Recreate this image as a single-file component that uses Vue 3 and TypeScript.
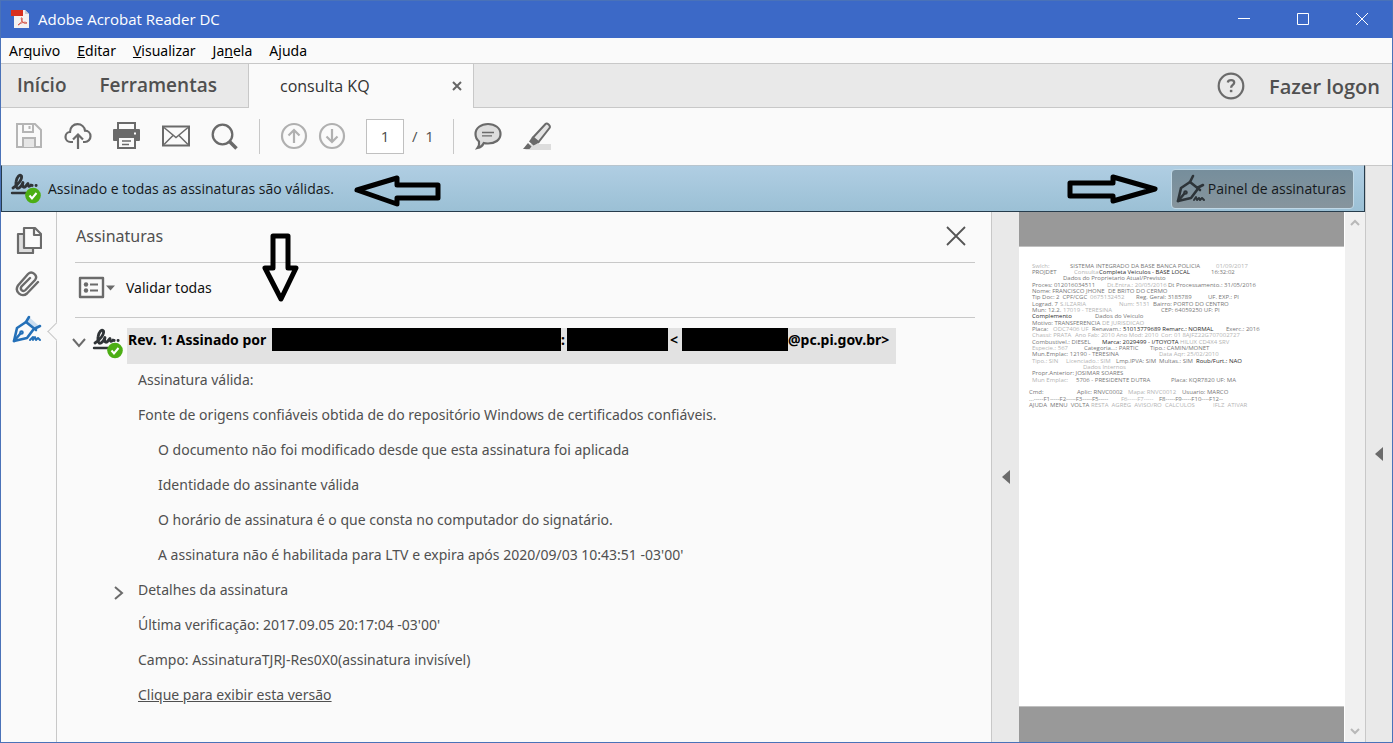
<script setup lang="ts">
type Segment = [text: string, width: number, tone?: string]

const menus = [
  { before: 'Ar', key: 'q', after: 'uivo' },
  { before: '', key: 'E', after: 'ditar' },
  { before: '', key: 'V', after: 'isualizar' },
  { before: 'Ja', key: 'n', after: 'ela' },
  { before: 'A', key: 'j', after: 'uda' },
]

const details = [
  'O documento não foi modificado desde que esta assinatura foi aplicada',
  'Identidade do assinante válida',
  'O horário de assinatura é o que consta no computador do signatário.',
  "A assinatura não é habilitada para LTV e expira após 2020/09/03 10:43:51 -03'00'",
]

const pageLines: Segment[][] = [
  [['Swlch:', 38, 'faint'], ['SISTEMA INTEGRADO DA BASE BANCA POLICIA', 146, 'mid'], ['01/09/2017', 40, 'faint']],
  [['PROJDET', 42, 'mid'], ['Consulta', 25, 'faint'], ['Completa Veiculos - BASE LOCAL', 112, 'dark'], ['16:32:02', 30, 'mid']],
  [['', 31], ['Dados do Proprietario Atual/Previsto', 120, 'mid']],
  [['Proces: 012016034511', 75, 'mid'], ['Dt.Entra.: 20/05/2016', 61, 'faint'], ['Dt Processamento.: 31/05/2016', 90, 'mid']],
  [['Nome: FRANCISCO JHONE', 76, 'mid'], ['DE BRITO DO CERMO', 70, 'mid']],
  [['Tip Doc: 2  CPF/CGC', 58, 'mid'], ['0675132452', 46, 'faint'], ['Reg. Geral: 3185789', 72, 'mid'], ['UF. EXP.: PI', 40, 'mid']],
  [['Lograd. 7', 28, 'mid'], ['S.ILZARIA', 59, 'faint'], ['Num: 5131', 34, 'faint'], ['Bairro: PORTO DO CENTRO', 80, 'mid']],
  [['Mun: 12.2.', 31, 'mid'], ['17019 - TERESINA', 98, 'faint'], ['CEP: 64059250 UF: PI', 70, 'mid']],
  [['Complemento', 63, 'dark'], ['Dados do Veiculo', 60, 'mid']],
  [['Motivo: TRANSFERENCIA', 70, 'mid'], ['DE JURISDICAO', 60, 'faint']],
  [['Placa:', 21, 'mid'], ['ODC7406 UF', 39, 'faint'], ['Renavam.:', 31, 'mid'], ['51013779689 Remarc.: NORMAL', 103, 'dark'], ['Exerc.: 2016', 40, 'mid']],
  [['Chassi: PRATA', 43, 'faint'], ['Ano Fab: 2010 Ano Mod: 2010', 86, 'faint'], ['Cor: 01 8AJFZ22G707002727', 90, 'faint']],
  [['Combustivel.: DIESEL', 70, 'mid'], ['Marca: 2029499 - I/TOYOTA', 78, 'dark'], ['HILUX CD4X4 SRV', 60, 'faint']],
  [['Especie.: 567', 52, 'faint'], ['Categoria...: PARTIC', 66, 'mid'], ['Tipo.: CAMIN/MONET', 60, 'mid']],
  [['Mun.Emplac: 12190 - TERESINA', 127, 'mid'], ['Data Aqr: 25/02/2010', 60, 'faint']],
  [['Tipo.: SIN', 34, 'faint'], ['Licenciado.: SIM', 50, 'faint'], ['Lmp.IPVA: SIM', 43, 'mid'], ['Multas.: SIM', 37, 'mid'], ['Roub/Furt.: NAO', 50, 'dark']],
  [['', 51], ['Dados Internos', 60, 'faint']],
  [['Propr.Anterior: JOSIMAR SOARES', 100, 'mid']],
  [['Mun Emplac:', 44, 'faint'], ['5706 - PRESIDENTE DUTRA', 95, 'mid'], ['Placa: KQR7820 UF: MA', 70, 'mid']],
  [],
  [['Cmd:', 48, 'mid'], ['Aplic: RNVC0002', 51, 'mid'], ['Mapa: RNVC0012', 54, 'faint'], ['Usuario: MARCO', 50, 'mid']],
  [['...-----F1-----F2-----F3-----F5-----', 92, 'mid'], ['F6-----F7-----', 38, 'faint'], ['F8-----F9-----F10----F12--', 70, 'mid']],
  [['AJUDA  MENU  VOLTA', 62, 'mid'], ['RESTA  AGREG  AVISO/RO  CALCULOS', 122, 'faint'], ['IFLZ  ATIVAR', 50, 'faint']],
]
</script>

<template>
  <div class="window">
    <header class="titlebar">
      <svg class="logo" viewBox="0 0 20 20" width="20" height="20">
        <path d="M4 1h11l4 4v14H4z" fill="#f4f2f1" />
        <path d="M15 1v4h4z" fill="#c9cbd2" />
        <path d="M1 1h12v6H1z" fill="#d8301f" />
        <path d="M8 16c3-2 5-5 4-7-1-1-1 1 0 3 1 2 3 3 5 2-2-2-6 0-9 2z" fill="none" stroke="#d5594c" />
      </svg>
      <h1>Adobe Acrobat Reader DC</h1>
      <div class="window-controls">
        <button aria-label="Minimizar"><svg viewBox="0 0 12 12" width="12" height="12"><path d="M0 5.500h12" /></svg></button>
        <button aria-label="Maximizar"><svg viewBox="0 0 12 12" width="12" height="12"><path d="M.5.5h11v11H.5z" /></svg></button>
        <button aria-label="Fechar"><svg viewBox="0 0 12 12" width="12" height="12"><path d="M0 0l12 12M12 0L0 12" /></svg></button>
      </div>
    </header>

    <nav class="menubar">
      <button v-for="m in menus" :key="m.key">{{ m.before }}<u>{{ m.key }}</u>{{ m.after }}</button>
    </nav>

    <div class="tabs">
      <div class="tab-group">
        <button class="main-tab">Início</button>
        <button class="main-tab">Ferramentas</button>
      </div>
      <div class="doc-tab">
        <span>consulta KQ</span>
        <button aria-label="Fechar guia"><svg viewBox="0 0 10 10" width="10" height="10"><path d="M1 1l8 8M9 1L1 9" stroke="#666" stroke-width="2" /></svg></button>
      </div>
      <div class="tab-end">
        <button aria-label="Ajuda">
          <svg viewBox="0 0 28 28" width="28" height="28" fill="none" stroke="#6b6b6b">
            <circle cx="14" cy="14" r="12.300" stroke-width="2.200" />
            <path d="M10.800 10.500c.5-3 6.400-3.200 6.400.3 0 2.200-3.100 2.200-3.100 4.900" stroke-width="2.300" />
            <path d="M14.100 17.800v2.400" stroke-width="2.500" />
          </svg>
        </button>
        <button class="login">Fazer logon</button>
      </div>
    </div>

    <div class="toolbar">
      <button class="tool" aria-label="Salvar">
        <svg viewBox="0 0 28 28" width="28" height="28" fill="none" stroke="#b5b5b5" stroke-width="2">
          <path d="M2 2h18l6 6v17H2z" /><path d="M8 25v-9h12v9" fill="#e6e6e6" /><path d="M8 2v8h10V2" /><path d="M14.500 4v3" />
        </svg>
      </button>
      <button class="tool" aria-label="Enviar">
        <svg viewBox="0 0 28 28" width="28" height="28" fill="none" stroke="#6a6a6a" stroke-width="2.200">
          <path d="M9 20H6.500A5 5 0 0 1 1.500 15c0-3 2-5 4.500-5C6 5 9.500 2.200 13.500 2.200c4 0 7 2.800 7.500 6.500 3 0 5.500 2.300 5.500 5.500S24 20 21 20h-2" />
          <path d="M14 27V13M9 17.500l5-5 5 5" />
        </svg>
      </button>
      <button class="tool" aria-label="Imprimir">
        <svg viewBox="0 0 28 28" width="28" height="28" fill="none" stroke="#6a6a6a" stroke-width="2">
          <path d="M5 8V1h17v7" /><path d="M1 8h25v10h-4v-2H5v2H1z" fill="#6a6a6a" stroke-linejoin="round" />
          <path d="M5 15h17v11H5z" fill="#fafafa" /><path d="M9 19h9M9 22.500h7" stroke-width="1.500" /><path d="M21 11.500h2" stroke="#fff" />
        </svg>
      </button>
      <button class="tool" aria-label="E-mail">
        <svg viewBox="0 0 28 28" width="28" height="28" fill="none" stroke="#6a6a6a">
          <path d="M1 4.500h26v19H1z" stroke-width="2" /><path d="M2 5.500l12 10 12-10M2 22.500l9-9M26 22.500l-9-9" stroke-width="1.500" />
        </svg>
      </button>
      <button class="tool" aria-label="Localizar">
        <svg viewBox="0 0 28 28" width="28" height="28" fill="none" stroke="#6a6a6a">
          <circle cx="11.500" cy="12.500" r="9.800" stroke-width="2.300" /><path d="M18.500 19.500l7 7" stroke-width="3.500" />
        </svg>
      </button>
      <i class="divider"></i>
      <button class="tool page" aria-label="Página anterior">
        <svg viewBox="0 0 28 28" width="28" height="28" fill="none" stroke="#b0b0b0" stroke-width="2.200">
          <circle cx="14" cy="14" r="12" /><path d="M14 21V8M8.500 13.500L14 8l5.500 5.500" />
        </svg>
      </button>
      <button class="tool page" aria-label="Próxima página">
        <svg viewBox="0 0 28 28" width="28" height="28" fill="none" stroke="#b0b0b0" stroke-width="2.200">
          <circle cx="14" cy="14" r="12" /><path d="M14 7v13M8.500 14.500L14 20l5.500-5.500" />
        </svg>
      </button>
      <input class="page-input" value="1" aria-label="Página" />
      <span class="page-total">/&nbsp; 1</span>
      <i class="divider second"></i>
      <button class="tool comment" aria-label="Comentário">
        <svg viewBox="0 0 28 28" width="28" height="28" fill="#ddd" stroke="#6a6a6a">
          <path d="M14 2c7 0 12.500 4 12.500 10S21 21.500 14 21.500c-1.500 0-3-.1-4.200-.5C8.500 24 6 25.500 3.500 26c1.500-2 2-4 1.500-6.500C2.800 17.600 1.500 15 1.500 12 1.500 6 7 2 14 2z" stroke-width="2.200" />
          <path d="M8 10.500h12M8 13.800h10" stroke-width="1.300" />
        </svg>
      </button>
      <button class="tool" aria-label="Realçar">
        <svg viewBox="0 0 28 28" width="28" height="28">
          <path d="M7 22h21v6H2z" fill="#ddd" />
          <path d="M10 15.500L22.500 2c1.500-1.500 5.500 1.500 4 4L15.500 20z" fill="#e4e4e4" stroke="#6a6a6a" stroke-width="2" />
          <path d="M9.500 14.500l-3.500 5 4.500 4 6-3z" fill="#6a6a6a" /><path d="M5 21l3.500 3.500L6.500 27H0z" fill="#6a6a6a" />
        </svg>
      </button>
    </div>

    <div class="body">
      <div class="content">
        <div class="sign-bar">
          <svg class="sign-mark" viewBox="0 0 32 32" width="32" height="32">
            <g fill="none" stroke="#303437" stroke-width="2.800" stroke-linecap="round" stroke-linejoin="round">
              <path d="M3 15C8 12 12.500 6 11.500 3 10 .5 6.500 4 6 9c-.5 4 .5 7 3 6 2-1 3-3 4-5.500-1 3.500 0 5.500 2 4.500l3-3.500c0 3 1 4 3 1.500" />
              <path d="M2 20h14" stroke-width="2.400" /><path d="M22 12.500h.2M26 12.500h.2" />
            </g>
            <circle cx="23" cy="22.500" r="7.800" fill="#4cae14" /><path d="M19.500 22.500l2.500 3 4.500-5.500" fill="none" stroke="#fff" stroke-width="2" />
          </svg>
          <span>Assinado e todas as assinaturas são válidas.</span>
          <button class="panel-button">
            <svg viewBox="0 0 30 30" width="30" height="30" fill="none" stroke="#2d3439" stroke-width="2.600" stroke-linejoin="round" stroke-linecap="round">
              <path d="M14 8L5 14 2 27l13-3 6-8" /><path d="M2 27l6-7M17 2l-3 6 10 8M21 14l6-3" /><circle cx="9.500" cy="18.500" r="1" />
              <path d="M18 26l2-3 1 3 2-2 1 2 2-2 2 2" stroke-width="2" />
            </svg>
            Painel de assinaturas
          </button>
        </div>

        <div class="workspace">
          <nav class="rail">
            <button aria-label="Miniaturas de página">
              <svg viewBox="0 0 28 28" width="28" height="28" fill="none" stroke="#6b6b6b" stroke-width="2.200" stroke-linejoin="round">
                <path d="M9 8H4v19h15v-5" fill="#ddd" /><path d="M10 2h11l6 6v14H10z" fill="#fafafa" /><path d="M20 2v7h7" />
              </svg>
            </button>
            <button aria-label="Anexos">
              <svg viewBox="0 0 28 28" width="28" height="28" fill="none" stroke="#6b6b6b" stroke-width="2.400" stroke-linecap="round">
                <path d="M24 12l-11 11.500c-5 4.500-13-1.500-9-8L14 4c4-4 10.500 1.500 7 6l-9.500 10c-2.500 2.500-6-.5-4-3.500L16 8" />
              </svg>
            </button>
            <button class="active" aria-label="Assinaturas">
              <svg viewBox="0 0 30 30" width="30" height="30" fill="none" stroke="#2470b8" stroke-width="2.600" stroke-linejoin="round" stroke-linecap="round">
                <path d="M17 3l9 8-3 5-9-8z" fill="#c9ddf0" stroke="none" />
                <path d="M14 8L5 14 2 27l13-3 6-8" /><path d="M2 27l6-7M17 3l-3 5 10 8M22 15l6-3" /><circle cx="9.500" cy="18.500" r="1" />
                <path d="M18 26l3-3 0 3 2-3 1 3 2-2 2 2" stroke-width="2" />
              </svg>
            </button>
            <i class="notch"></i>
          </nav>

          <section class="panel">
            <div class="panel-head">
              <h2>Assinaturas</h2>
              <button aria-label="Fechar painel"><svg viewBox="0 0 20 20" width="20" height="20"><path d="M1 1l18 18M19 1L1 19" stroke="#555" stroke-width="1.800" /></svg></button>
            </div>
            <div class="panel-actions">
              <button aria-label="Opções">
                <svg viewBox="0 0 38 24" width="38" height="24" fill="#6b6b6b">
                  <path d="M2 2h23v19H2z" fill="none" stroke="#6b6b6b" stroke-width="2.400" stroke-linejoin="round" /><circle cx="8" cy="8.500" r="2.200" /><circle cx="8" cy="14.500" r="2.200" />
                  <path d="M12 7.500h8v2h-8zM12 13.500h8v2h-8zM28 9.500h9l-4.500 5z" />
                </svg>
              </button>
              <button class="validate">Validar todas</button>
            </div>

            <div class="revision">
              <button class="toggle" aria-label="Recolher"><svg viewBox="0 0 16 10" width="16" height="10"><path d="M2 1l6 7 6-7" fill="none" stroke="#6b6b6b" stroke-width="2" /></svg></button>
              <svg class="sign-mark" viewBox="0 0 32 32" width="32" height="32">
                <g fill="none" stroke="#303437" stroke-width="2.800" stroke-linecap="round" stroke-linejoin="round">
                  <path d="M3 15C8 12 12.500 6 11.500 3 10 .5 6.500 4 6 9c-.5 4 .5 7 3 6 2-1 3-3 4-5.500-1 3.500 0 5.500 2 4.500l3-3.500c0 3 1 4 3 1.500" />
                  <path d="M2 20h14" stroke-width="2.400" /><path d="M22 12.500h.2M26 12.500h.2" />
                </g>
                <circle cx="23" cy="22.500" r="7.800" fill="#4cae14" /><path d="M19.500 22.500l2.500 3 4.500-5.500" fill="none" stroke="#fff" stroke-width="2" />
              </svg>
              <div class="revision-title">
                <span class="rev-name">Rev. 1: Assinado por</span>
                <i class="redact name"></i>
                <span class="colon">:</span>
                <i class="redact number"></i>
                <span class="open">&lt;</span>
                <i class="redact mail"></i>
                <span>@pc.pi.gov.br&gt;</span>
              </div>
            </div>
            <div class="rows">
              <p>Assinatura válida:</p>
              <p>Fonte de origens confiáveis obtida de do repositório Windows de certificados confiáveis.</p>
              <p v-for="d in details" :key="d" class="nested">{{ d }}</p>
              <p class="expandable">
                <button aria-label="Expandir"><svg viewBox="0 0 10 16" width="10" height="16"><path d="M1 2l7 6-7 6" fill="none" stroke="#6b6b6b" stroke-width="2" /></svg></button>
                Detalhes da assinatura
              </p>
              <p>Última verificação: 2017.09.05 20:17:04 -03'00'</p>
              <p>Campo: AssinaturaTJRJ-Res0X0(assinatura invisível)</p>
              <p><a href="#">Clique para exibir esta versão</a></p>
            </div>
          </section>

          <button class="splitter" aria-label="Recolher painel"><svg viewBox="0 0 8 14" width="8" height="14"><path d="M8 0v14L0 7z" fill="#6b6b6b" /></svg></button>

          <main class="viewer">
            <article class="sheet">
              <div v-for="(line, i) in pageLines" :key="i" class="line" :class="{ footer: i > 19 }">
                <span v-for="(s, j) in line" :key="j" :class="s[2]" :style="{ flexBasis: s[1] + 'px' }">{{ s[0] }}</span>
              </div>
            </article>
          </main>
          <div class="scrollbar">
            <svg viewBox="0 0 10 8" width="10" height="8"><path d="M1 6l4-4 4 4" /></svg>
            <svg viewBox="0 0 10 8" width="10" height="8"><path d="M1 2l4 4 4-4" /></svg>
          </div>
        </div>
      </div>
      <button class="tools-strip" aria-label="Abrir ferramentas"><svg viewBox="0 0 8 14" width="8" height="14"><path d="M8 0v14L0 7z" fill="#6b6b6b" /></svg></button>
    </div>

    <svg class="arrow arrow-left" viewBox="0 0 88 34" width="88" height="34"><path d="M4 17L44 5v7h41v13H44v6z" /></svg>
    <svg class="arrow arrow-right" viewBox="0 0 94 34" width="94" height="34"><path d="M4 11h43V5l42 12-42 12v-5H4z" /></svg>
    <svg class="arrow arrow-down" viewBox="0 0 38 72" width="38" height="72"><path d="M12 5h15v32h8L20 68 4 37h8z" /></svg>
  </div>
</template>

<style>
body {
  margin: 0;
}
</style>

<style scoped>
* {
  box-sizing: border-box;
}
.window {
  position: relative;
  display: flex;
  flex-direction: column;
  height: 100vh;
  overflow: hidden;
  border: 1px solid #4a72b8;
  background: #fafafa;
  color: #505050;
  font-family: "Open Sans", "Noto Sans", sans-serif;
  font-size: 14px;
}
button {
  display: flex;
  align-items: center;
  padding: 0;
  border: 0;
  background: none;
  color: inherit;
  font: inherit;
}
svg {
  display: block;
  flex: none;
}
h1, h2, p {
  margin: 0;
  font-weight: 400;
}
.titlebar {
  display: flex;
  flex: 0 0 37px;
  align-items: center;
  padding: 0 1px 1px 9px;
  background: #3c69c7;
  color: #fff;
}
.titlebar h1 {
  margin-left: 8px;
  font-size: 15px;
}
.window-controls {
  display: flex;
  margin-left: auto;
}
.window-controls button {
  justify-content: center;
  width: 59px;
  height: 36px;
}
.window-controls svg {
  fill: none;
  stroke: #fff;
}
.menubar {
  display: flex;
  flex: 0 0 25px;
  gap: 17px;
  padding-left: 8px;
  color: #000;
  font-family: "Noto Sans", "Open Sans", sans-serif;
}
.tabs {
  display: flex;
  flex: 0 0 45px;
  border-top: 1px solid #c8c8c8;
}
.tab-group {
  display: flex;
  gap: 33px;
  width: 248px;
  padding-left: 16px;
  padding-bottom: 1px;
  border-right: 1px solid #c8c8c8;
  border-bottom: 1px solid #c8c8c8;
  background: #e9e9e9;
}
.main-tab {
  font-size: 19px;
  font-weight: 600;
}
.login {
  font-size: 20px;
  font-weight: 600;
}
.doc-tab {
  display: flex;
  align-items: center;
  justify-content: space-between;
  width: 224px;
  padding: 0 11px 1px 31px;
  color: #333;
  font-size: 16px;
}
.tab-end {
  display: flex;
  flex: 1;
  gap: 24px;
  justify-content: flex-end;
  padding-right: 12px;
  padding-top: 1px;
  border-bottom: 1px solid #c8c8c8;
  border-left: 1px solid #c8c8c8;
  background: #e9e9e9;
}
.toolbar {
  display: flex;
  flex: 0 0 57px;
  align-items: center;
  padding-bottom: 1px;
  padding-left: 14px;
}
.tool {
  margin-right: 21px;
}
.tool.page {
  margin-right: 10px;
}
.tool.comment {
  margin-left: 20px;
}
.divider {
  width: 1px;
  height: 35px;
  margin-right: 20px;
  margin-left: -1px;
  background: #c8c8c8;
}
.divider.second {
  margin: 0;
}
.page-input {
  width: 38px;
  height: 35px;
  margin-left: 10px;
  border: 1px solid #c0c0c0;
  background: #fff;
  color: #4b4b4b;
  font: inherit;
  font-size: 15px;
  text-align: center;
}
.page-total {
  width: 49px;
  padding-left: 8px;
  font-size: 15px;
}
.body {
  display: flex;
  flex: 1;
  min-height: 0;
}
.content {
  display: flex;
  flex: 1;
  flex-direction: column;
  min-width: 0;
}
.sign-bar {
  display: flex;
  flex: 0 0 47px;
  align-items: center;
  border: 1px solid #263c4c;
  border-top-color: #b8c5ce;
  background: linear-gradient(#b0cee3, #9bc0d5);
  color: #15191c;
}
.sign-mark {
  margin-right: 6px;
}
.sign-bar .sign-mark {
  margin-left: 8px;
}
.panel-button {
  gap: 2px;
  height: 40px;
  margin-left: auto;
  margin-right: 10px;
  padding: 0 7px 0 4px;
  border: 1px solid #c0d8e6;
  border-radius: 4px;
  background: linear-gradient(#768e9c, #87959d);
}
.workspace {
  display: flex;
  flex: 1;
  min-height: 0;
}
.rail {
  position: relative;
  display: flex;
  flex: 0 0 56px;
  flex-direction: column;
  gap: 16px;
  padding: 14px 0 0 13px;
  border-right: 1px solid #c8c8c8;
}
.rail .active {
  margin-left: -2px;
}
.notch {
  position: absolute;
  top: 113px;
  right: -7px;
  width: 13px;
  height: 13px;
  border: solid #c8c8c8;
  border-width: 0 0 1px 1px;
  background: #fafafa;
  transform: rotate(45deg);
}
.panel {
  flex: 1;
  min-width: 0;
  border-right: 1px solid #c8c8c8;
  font-family: "Noto Sans", "Open Sans", sans-serif;
}
.panel-head, .panel-actions {
  display: flex;
  align-items: center;
  margin: 0 16px 0 18px;
  border-bottom: 1px solid #c8c8c8;
}
.panel-head {
  justify-content: space-between;
  height: 51px;
  padding: 0 9px 2px 1px;
}
.panel-head h2 {
  font-size: 16px;
}
.panel-actions {
  gap: 10px;
  height: 55px;
  padding-left: 3px;
  padding-bottom: 5px;
}
.validate {
  color: #111;
}
.revision {
  display: flex;
  height: 36px;
  margin-top: 10px;
  padding-left: 14px;
}
.revision .sign-mark {
  margin-left: 5px;
  margin-right: 3px;
}
.toggle {
  padding-bottom: 6px;
}
.revision-title {
  display: flex;
  width: 769px;
  background: #e2e2e2;
  color: #000;
  font-weight: 700;
  line-height: 24px;
  white-space: nowrap;
}
.rev-name {
  width: 145px;
  padding-left: 1px;
}
.colon {
  width: 6px;
}
.open {
  width: 14px;
  padding-left: 2px;
}
.redact {
  height: 23px;
  background: #000;
}
.redact.name {
  width: 289px;
}
.redact.number {
  width: 101px;
}
.redact.mail {
  width: 106px;
}
.rows {
  margin-top: -2px;
  padding-left: 81px;
  line-height: 35px;
  white-space: nowrap;
}
.rows .nested {
  padding-left: 20px;
}
.rows a {
  color: inherit;
}
.expandable {
  display: flex;
}
.expandable button {
  width: 10px;
  margin-left: -24px;
  margin-right: 14px;
  padding-top: 6px;
}
.splitter {
  justify-content: center;
  width: 27px;
  background: #e9e9e9;
}
.viewer {
  display: flex;
  flex: 0 0 326px;
  flex-direction: column;
  padding: 34px 0 35px;
  border-right: 1px solid #fff;
  background: #999;
}
.sheet {
  flex: 1;
  padding: 16px 0 0 13px;
  border: solid #c0c0c0;
  border-width: 1px 0;
  background: #fff;
  font-size: 6px;
}
.line {
  display: flex;
  height: 6px;
  line-height: 6px;
  white-space: pre;
}
.line:nth-child(3n) {
  height: 7px;
}
.line.footer {
  margin-left: -3px;
}
.line span {
  flex-grow: 0;
  flex-shrink: 0;
}
.faint {
  color: #b4b4b4;
}
.mid {
  color: #777;
}
.dark {
  color: #2a2a2a;
}
.scrollbar {
  display: flex;
  flex: 0 0 20px;
  flex-direction: column;
  align-items: center;
  justify-content: space-between;
  padding: 7px 0;
  background: #f0f0f0;
}
.scrollbar svg {
  fill: none;
  stroke: #b8b8b8;
  stroke-width: 2;
}
.tools-strip {
  justify-content: center;
  width: 27px;
  border-left: 1px solid #c8c8c8;
  border-top: 1px solid #c8c8c8;
  background: #e9e9e9;
}
.arrow {
  position: absolute;
  fill: none;
  stroke: #000;
  stroke-width: 5;
  stroke-linejoin: round;
}
.arrow-left {
  top: 172px;
  left: 352px;
}
.arrow-right {
  top: 171px;
  left: 1065px;
}
.arrow-down {
  top: 230px;
  left: 260px;
}
</style>
